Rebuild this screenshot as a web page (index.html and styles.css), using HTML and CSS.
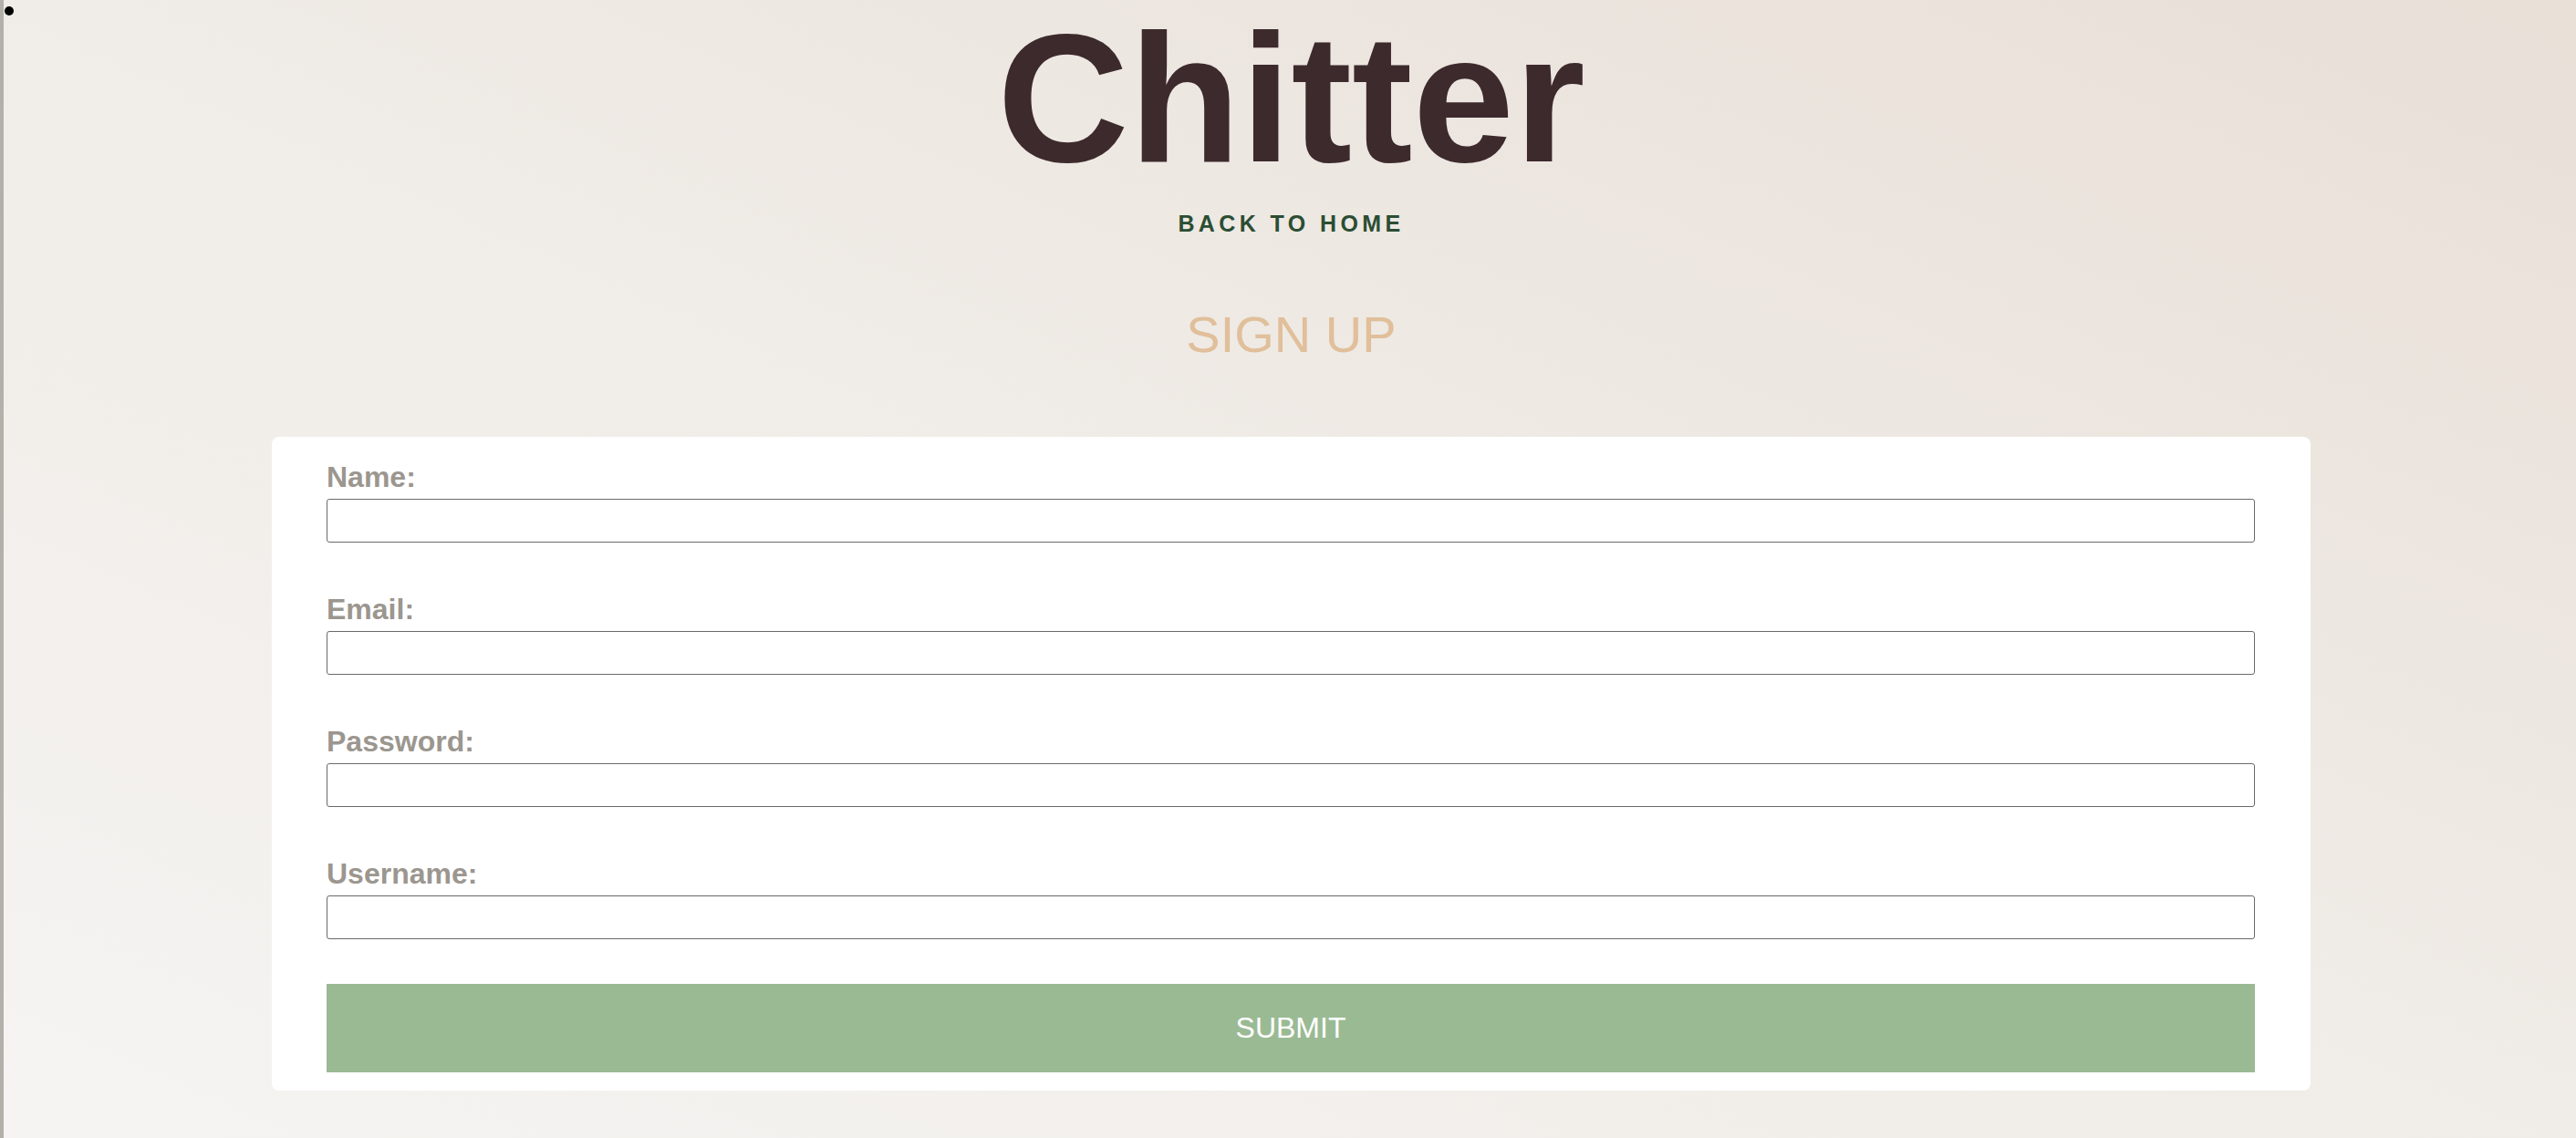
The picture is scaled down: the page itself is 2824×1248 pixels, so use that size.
FILE: index.html
```html
<!DOCTYPE html>
<html lang="en">
<head>
<meta charset="utf-8">
<title>Chitter - Sign up</title>
<link rel="stylesheet" href="styles.css">
</head>
<body>
<span class="stray-dot"></span>
<header class="site-header">
  <h1 class="brand">Chitter</h1>
  <a class="home-link" href="#">BACK TO HOME</a>
</header>
<main class="page">
  <h2 class="page-title">SIGN UP</h2>
  <form class="card">
    <div class="field">
      <label class="field-label" for="name">Name:</label>
      <input class="field-input" id="name" type="text">
    </div>
    <div class="field">
      <label class="field-label" for="email">Email:</label>
      <input class="field-input" id="email" type="text">
    </div>
    <div class="field">
      <label class="field-label" for="password">Password:</label>
      <input class="field-input" id="password" type="password">
    </div>
    <div class="field">
      <label class="field-label" for="username">Username:</label>
      <input class="field-input" id="username" type="text">
    </div>
    <button class="submit" type="button">SUBMIT</button>
  </form>
</main>
</body>
</html>
```
FILE: styles.css
```css
html {
  height: 100%;
}

body {
  margin: 0;
  min-height: 100%;
  box-sizing: border-box;
  padding: 8px 8px 8px 11px;
  border-left: 4px solid #b3afa9;
  background: linear-gradient(to top right, #f5f4f2 0%, #f0ece7 50%, #e8dfd7 100%);
  font-family: "Liberation Sans", Arial, Helvetica, sans-serif;
  position: relative;
}

.stray-dot {
  position: absolute;
  left: 1px;
  top: 7px;
  width: 10px;
  height: 10px;
  border-radius: 50%;
  background: #000;
}

.site-header {
  display: flex;
  flex-direction: column;
  align-items: center;
}

.brand {
  margin: 0;
  font-size: 200px;
  line-height: 1;
  font-weight: 700;
  color: #3d2a2d;
}

.home-link {
  margin-top: 22px;
  font-size: 25px;
  line-height: 30px;
  font-weight: 700;
  letter-spacing: 4.4px;
  color: #2b4d33;
  text-decoration: none;
}

.page {
  display: flex;
  flex-direction: column;
  align-items: center;
}

.page-title {
  margin: 75px 0 0;
  font-size: 56px;
  line-height: 64px;
  font-weight: 400;
  color: #e0bf9a;
}

.card {
  margin-top: 80px;
  width: 2235px;
  box-sizing: border-box;
  padding: 26px 61px 20px 60px;
  background: #ffffff;
  border-radius: 8px;
  display: flex;
  flex-direction: column;
}

.field {
  display: flex;
  flex-direction: column;
  margin-bottom: 55px;
}

.field:last-of-type {
  margin-bottom: 49px;
}

.field-label {
  font-size: 32px;
  line-height: 36px;
  font-weight: 700;
  color: #9b968f;
  margin-bottom: 6px;
}

.field-input {
  height: 48px;
  box-sizing: border-box;
  border: 1px solid #6a6a6a;
  border-radius: 3px;
  background: #fff;
  margin: 0;
  padding: 0 8px;
  font-size: 28px;
  font-family: "Liberation Sans", Arial, sans-serif;
}

.submit {
  height: 97px;
  border: none;
  border-radius: 0;
  background: #9aba94;
  color: #ffffff;
  font-family: "Liberation Sans", Arial, sans-serif;
  font-size: 32px;
  cursor: pointer;
}
```
